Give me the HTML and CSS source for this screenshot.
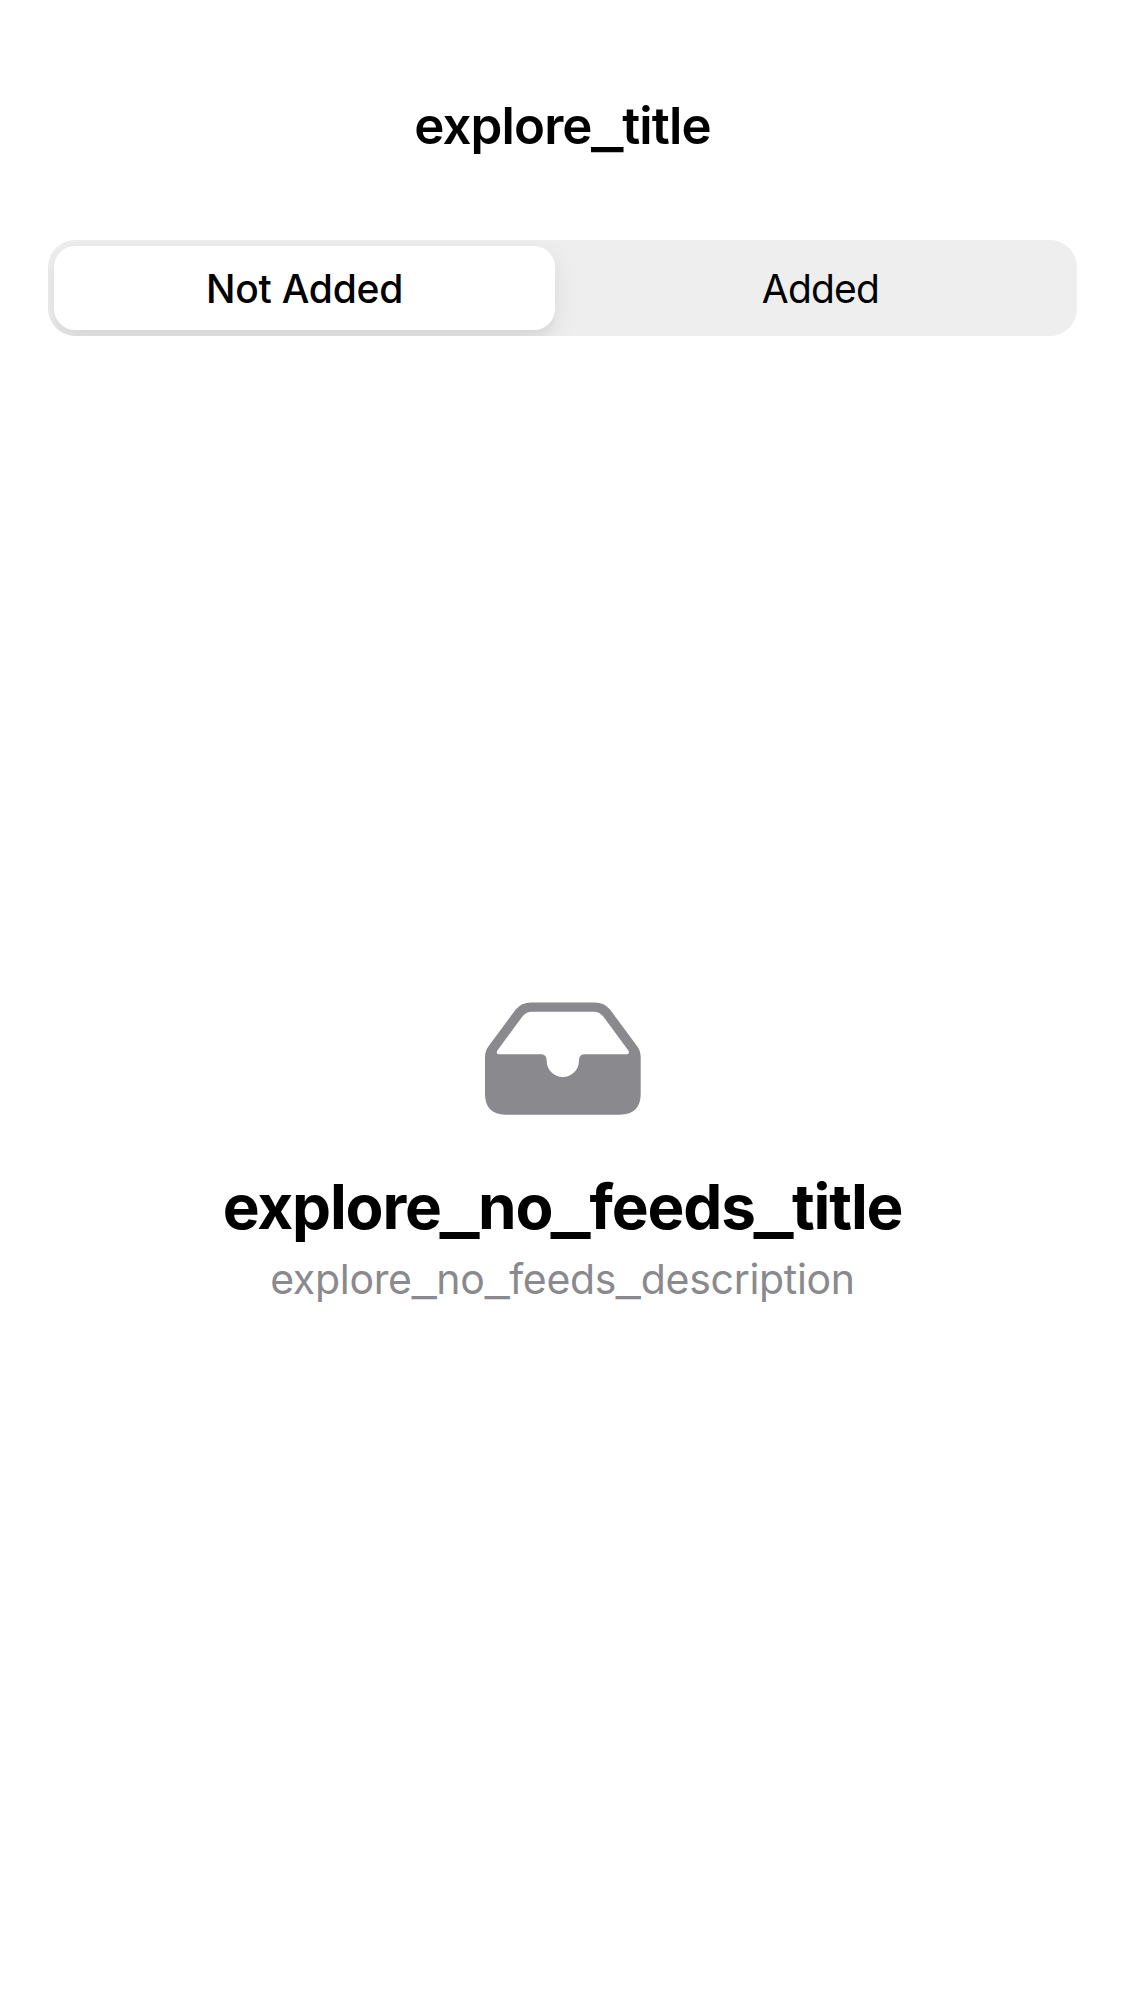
FILE: index.html
```
<!DOCTYPE html>
<html lang="en">
<head>
<meta charset="utf-8">
<title>explore_title</title>
<link rel="stylesheet" href="styles.css">
</head>
<body>
<header class="navbar"><h1 class="navbar-title">explore<span class="underscore">_</span>title</h1></header>
<div class="segmented" role="tablist">
  <button class="segment selected" role="tab"><span class="label">Not Added</span></button>
  <button class="segment" role="tab"><span class="label">Added</span></button>
</div>
<main class="empty">
  <svg class="tray" viewBox="0 0 156 114" aria-hidden="true">
    <path fill="#8a8a8e" fill-rule="evenodd" d="M46 .4H109.7Q119.5 .4 125 7.5L152 44Q155.7 49 155.7 55V92C155.7 105 149 112.7 135 112.7H20.7C6.7 112.7 0 105 0 92V55Q0 49 3.7 44L30.7 7.5Q36.2 .4 46 .4ZM47 9.7Q41 9.7 37 15L12.2 48.8Q10.8 52.2 13.8 52.2H56.5Q61.7 52.2 61.7 58.9A16 16 0 0 0 93.9 58.9Q93.9 52.2 99.1 52.2H141.9Q144.9 52.2 143.5 48.8L118.7 15Q114.7 9.7 108.7 9.7Z"/>
  </svg>
  <h2 class="empty-title">explore<span class="underscore">_</span>no<span class="underscore">_</span>feeds<span class="underscore">_</span>title</h2>
  <p class="empty-text">explore<span class="underscore">_</span>no<span class="underscore">_</span>feeds<span class="underscore">_</span>description</p>
</main>
</body>
</html>
```
FILE: styles.css
```
body { margin: 0; background: #fff; color: #000; font-family: Inter, sans-serif; min-height: 2001px; }
.navbar { height: 240px; box-sizing: border-box; padding-top: 94px; text-align: center; }
.navbar-title { margin: 0; font-size: 51px; font-weight: 600; line-height: 64px; letter-spacing: -.9px; }
/* Full-width underscores that touch the neighbouring letters */
.underscore { display: inline-block; width: .6em; letter-spacing: 0; text-align: center; transform: translateY(.055em) scaleX(1.36); }
.segmented { display: flex; gap: 15px; height: 96px; margin: 0 48px; padding: 6px; box-sizing: border-box; border-radius: 27px; background: #eee; overflow: hidden; }
.segment { flex: 1; border: 0; padding: 1px 0 0; background: none; border-radius: 21px; font: 400 39px/83px Inter, sans-serif; letter-spacing: -.8px; color: #000; }
.selected { background: #fff; font-weight: 500; letter-spacing: -.25px; box-shadow: 0 9px 24px rgba(0,0,0,.09), 0 9px 3px rgba(0,0,0,.02); }
.empty { display: flex; flex-direction: column; align-items: center; padding-top: 666px; }
.tray { width: 156px; height: 114px; }
.empty-title { margin: 52px 0 0; font-size: 62px; font-weight: 700; line-height: 78px; letter-spacing: -1.15px; }
.empty-text { margin: 6px 0 0; font-size: 41px; line-height: 54px; letter-spacing: -.3px; color: #8a8a8e; }
```
